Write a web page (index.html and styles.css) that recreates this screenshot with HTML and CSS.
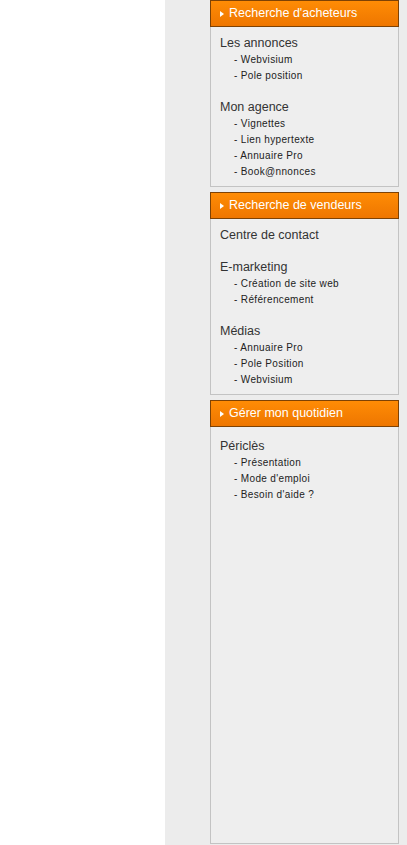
FILE: index.html
```html
<!DOCTYPE html>
<html lang="fr">
<head>
<meta charset="utf-8">
<title>Menu</title>
<link rel="stylesheet" href="styles.css">
</head>
<body>
<div class="page">
  <div class="main"></div>
  <aside class="sidebar">
    <section class="panel">
      <h2 class="panel-title"><span class="arrow"></span>Recherche d'acheteurs</h2>
      <div class="panel-body">
        <div class="group">
          <div class="group-title">Les annonces</div>
          <ul class="links">
            <li>- Webvisium</li>
            <li>- Pole position</li>
          </ul>
        </div>
        <div class="group">
          <div class="group-title">Mon agence</div>
          <ul class="links">
            <li>- Vignettes</li>
            <li>- Lien hypertexte</li>
            <li>- Annuaire Pro</li>
            <li>- Book@nnonces</li>
          </ul>
        </div>
      </div>
    </section>
    <section class="panel">
      <h2 class="panel-title"><span class="arrow"></span>Recherche de vendeurs</h2>
      <div class="panel-body">
        <div class="group">
          <div class="group-title">Centre de contact</div>
        </div>
        <div class="group">
          <div class="group-title">E-marketing</div>
          <ul class="links">
            <li>- Création de site web</li>
            <li>- Référencement</li>
          </ul>
        </div>
        <div class="group">
          <div class="group-title">Médias</div>
          <ul class="links">
            <li>- Annuaire Pro</li>
            <li>- Pole Position</li>
            <li>- Webvisium</li>
          </ul>
        </div>
      </div>
    </section>
    <section class="panel panel-last">
      <h2 class="panel-title"><span class="arrow"></span>Gérer mon quotidien</h2>
      <div class="panel-body panel-body-tall">
        <div class="group">
          <div class="group-title">Périclès</div>
          <ul class="links">
            <li>- Présentation</li>
            <li>- Mode d'emploi</li>
            <li>- Besoin d'aide ?</li>
          </ul>
        </div>
      </div>
    </section>
  </aside>
</div>
</body>
</html>
```

FILE: styles.css
```css
html, body {
  margin: 0;
  padding: 0;
  background: #ffffff;
}

body {
  font-family: "Liberation Sans", Arial, sans-serif;
}

.page {
  display: flex;
  min-height: 845px;
}

.main {
  width: 165px;
  flex: none;
  background: #ffffff;
}

.sidebar {
  width: 242px;
  flex: none;
  background: #ececec;
  padding: 0 0 1px 45px;
  box-sizing: border-box;
  display: flex;
  flex-direction: column;
  gap: 5px;
}

.panel {
  width: 189px;
  display: flex;
  flex-direction: column;
}

.panel-last {
  flex: 1;
}

.panel-title {
  margin: 0;
  height: 25px;
  border: 1px solid #7e4204;
  background: linear-gradient(#ff8c05, #ee7600);
  color: #ffffff;
  font-size: 12.5px;
  font-weight: normal;
  line-height: 25px;
  padding-left: 9px;
  display: flex;
  align-items: center;
  gap: 5px;
}

.arrow {
  width: 0;
  height: 0;
  border-top: 3.5px solid transparent;
  border-bottom: 3.5px solid transparent;
  border-left: 4px solid #ffffff;
}

.panel-body {
  background: #eeeeee;
  border: 1px solid #c3c3c3;
  border-top: none;
  padding: 7px 9px 6px 9px;
  display: flex;
  flex-direction: column;
  gap: 14px;
}

.panel-body-tall {
  flex: 1;
  padding-top: 10px;
}

.group-title {
  font-size: 12.5px;
  line-height: 18px;
  color: #333333;
}

.links {
  list-style: none;
  margin: 0;
  padding: 0 0 0 14px;
}

.links li {
  font-size: 10px;
  line-height: 16px;
  letter-spacing: 0.35px;
  color: #222222;
}
```
